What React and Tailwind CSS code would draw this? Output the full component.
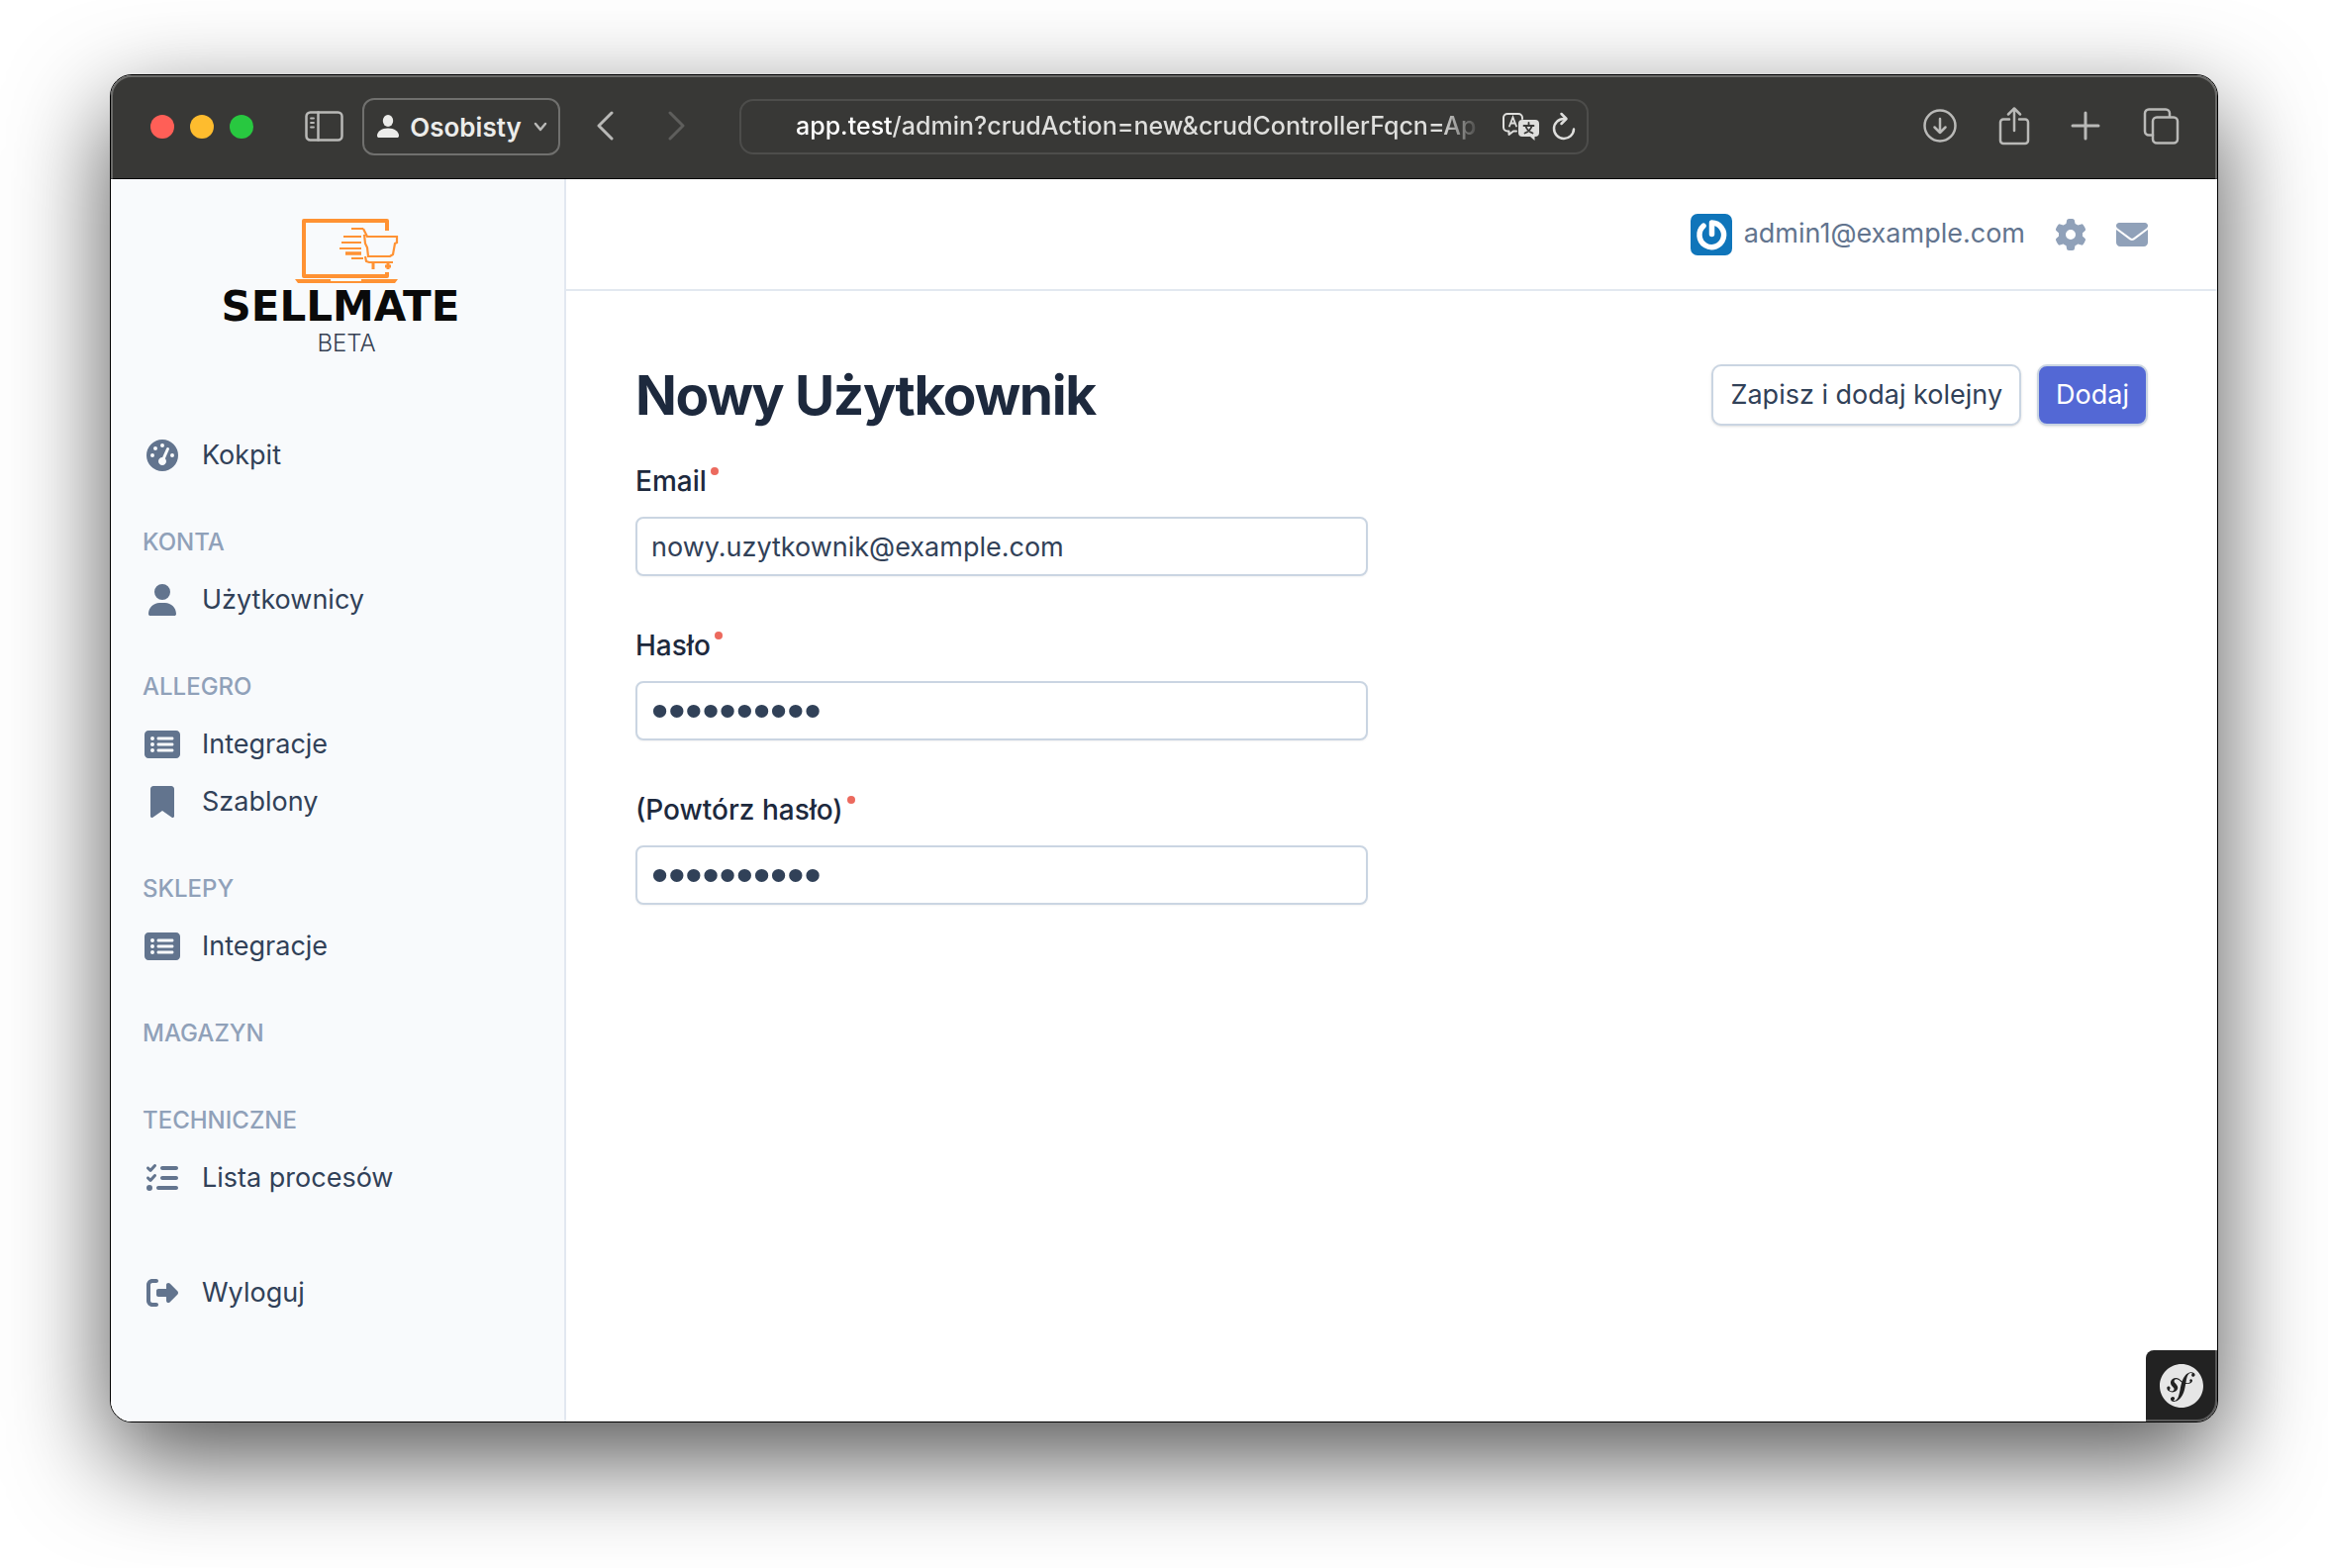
import {
  FaBookmark,
  FaEnvelope,
  FaGaugeHigh,
  FaGear,
  FaListCheck,
  FaRectangleList,
  FaRightFromBracket,
  FaUser,
} from "react-icons/fa6";
import { SiSymfony } from "react-icons/si";

const menu = [
  { items: [{ label: "Kokpit", icon: FaGaugeHigh }] },
  { title: "KONTA", items: [{ label: "Użytkownicy", icon: FaUser }] },
  {
    title: "ALLEGRO",
    items: [
      { label: "Integracje", icon: FaRectangleList, wide: true },
      { label: "Szablony", icon: FaBookmark },
    ],
  },
  { title: "SKLEPY", items: [{ label: "Integracje", icon: FaRectangleList, wide: true }] },
  { title: "MAGAZYN", items: [] },
  { title: "TECHNICZNE", items: [{ label: "Lista procesów", icon: FaListCheck }] },
];

const fields = [
  { id: "email", label: "Email", type: "email", value: "nowy.uzytkownik@example.com" },
  { id: "password", label: "Hasło", type: "password", value: "haslo12345" },
  { id: "password-repeat", label: "(Powtórz hasło)", type: "password", value: "haslo12345" },
];

// Outline icons used in the browser toolbar
const Stroke = ({ width, height, strokeWidth = 2.5, className = "", children }) => (
  <svg
    width={width}
    height={height}
    viewBox={`0 0 ${width} ${height}`}
    fill="none"
    stroke="currentColor"
    strokeWidth={strokeWidth}
    strokeLinecap="round"
    strokeLinejoin="round"
    className={className}
    aria-hidden="true"
  >
    {children}
  </svg>
);

const TranslateIcon = () => (
  <svg width="40" height="30" viewBox="0 0 40 30" fill="none" aria-hidden="true">
    <path
      d="M15 19.500h-3l-4.500 3.500v-3.500H6a4 4 0 0 1-4-4V6a4 4 0 0 1 4-4h11a4 4 0 0 1 4 4v1"
      stroke="currentColor"
      strokeWidth="2"
      strokeLinecap="round"
      strokeLinejoin="round"
    />
    <path d="M8 14.500 11.500 5.500 15 14.500M9.200 11.500h4.600" stroke="currentColor" strokeWidth="1.800" strokeLinecap="round" />
    <path d="M21 8h13a4 4 0 0 1 4 4v9a4 4 0 0 1-4 4h-.5v4l-4.500-4h-8a4 4 0 0 1-4-4v-9a4 4 0 0 1 4-4z" fill="currentColor" />
    <path d="M27.500 11v2.500M22.500 14h10M24.500 14.500c1 3.500 3.500 5.500 7 7M30.500 14.500c-1 3.500-3.500 5.500-7 7" stroke="#383836" strokeWidth="1.800" strokeLinecap="round" />
  </svg>
);

const Gravatar = () => (
  <svg viewBox="0 0 42 42" className="size-[42px]" aria-hidden="true">
    <rect width="42" height="42" rx="7" fill="#0f75ba" />
    <path
      d="M13 12.200A12.300 12.300 0 1 0 21.500 9V20.500"
      fill="none"
      stroke="#fff"
      strokeWidth="5.500"
      strokeLinecap="round"
      strokeLinejoin="round"
    />
  </svg>
);

const Logo = () => (
  <a href="#" className="flex flex-col items-center pl-1.5">
    <svg width="106" height="68" viewBox="0 0 106 68" fill="none" stroke="#ff9233" className="ml-3" aria-hidden="true">
      <path d="M94 14V4H10v56h84v-4" strokeWidth="4" strokeLinejoin="round" />
      <path d="M1 63h104l-3 4H4z" fill="#ff9233" stroke="none" />
      <path d="M37 63h31v2H37z" fill="#f8fafc" stroke="none" />
      <path d="M58 12h12M50 20h18M48 26h20M46 32h22M58 42h12" strokeWidth="2" />
      <path d="M52 37h16" strokeWidth="3.500" />
      <path d="M70 12l4 8h30v6l-2 1-2 11-3 2H75l-1-9-2-4-1-9M72 40l1 5 3 1h24" strokeWidth="2.200" />
      <path d="M80 47v6M95 47v6M92 50h6" strokeWidth="3" />
    </svg>
    <span className="font-['DejaVu_Sans',sans-serif] text-[42px] leading-[46px] font-bold text-[#0a0a0a]">SELLMATE</span>
    <span className="ml-3 text-[24px] leading-7 font-light text-gray-700">BETA</span>
  </a>
);

const MenuItem = ({ label, icon: Icon, wide }) => (
  <a href="#" className="flex h-[58px] items-center gap-5 text-[27px] text-slate-700">
    <span className="flex w-10 justify-center text-slate-500">
      <Icon size={wide ? 36 : 32} />
    </span>
    {label}
  </a>
);

const Toolbar = () => (
  <div className="grid h-[105px] shrink-0 grid-cols-[1fr_858px_1fr] items-center border-b border-black bg-[#383836] text-[#b9b9b7]">
    <div className="flex items-center pl-10">
      <div className="flex gap-4">
        <span className="size-6 rounded-full bg-[#ff5f57]" />
        <span className="size-6 rounded-full bg-[#febc2e]" />
        <span className="size-6 rounded-full bg-[#28c840]" />
      </div>
      <button type="button" aria-label="Pasek boczny" className="ml-[52px]">
        <Stroke width={40} height={32}>
          <rect x="1.500" y="1.500" width="36" height="28" rx="4" />
          <path d="M13.500 1.500v28" />
          <path d="M6 7.500h3M6 12h3M6 16.500h3" strokeWidth="1.800" />
        </Stroke>
      </button>
      <button
        type="button"
        className="ml-[18px] flex h-[58px] w-[200px] items-center justify-between rounded-[12px] border-2 border-[#70706e] pr-2.5 pl-[13px] text-[26px] font-semibold text-[#ececea]"
      >
        <svg width="22" height="24" viewBox="0 0 22 24" fill="currentColor" aria-hidden="true">
          <ellipse cx="11" cy="6" rx="5.200" ry="6" />
          <path d="M0 21c0-4 4.500-7.500 11-7.500S22 17 22 21c0 1.500-.8 2-2 2H2c-1.200 0-2-.5-2-2z" />
        </svg>
        Osobisty
        <Stroke width={16} height={12} className="text-[#b9b9b7]">
          <path d="M3 3l5 6 5-6" />
        </Stroke>
      </button>
      <button type="button" aria-label="Wstecz" className="ml-9">
        <Stroke width={20} height={32} strokeWidth={3}>
          <path d="M16 2L3 15l13 13" />
        </Stroke>
      </button>
      <button type="button" aria-label="Dalej" disabled className="ml-[52px] text-[#5e5e5c]">
        <Stroke width={20} height={32} strokeWidth={3}>
          <path d="M3 2l13 13L3 28" />
        </Stroke>
      </button>
    </div>

    <div className="flex h-[56px] items-center rounded-[14px] border-2 border-[#4d4d4b] pr-2.5 pl-[55px] text-[#dededc]">
      <div className="min-w-0 flex-1 mask-r-from-94% text-[25px] font-medium whitespace-nowrap">
        <span className="text-white">app.test</span>/admin?crudAction=new&amp;crudControllerFqcn=Ap
      </div>
      <button type="button" aria-label="Przetłumacz" className="ml-5">
        <TranslateIcon />
      </button>
      <button type="button" aria-label="Odśwież" className="ml-2.5">
        <Stroke width={26} height={30}>
          <path d="M13 7a10 10 0 1 0 10 10.500" />
          <path d="M10.500 2l5 5-5 5" />
        </Stroke>
      </button>
    </div>

    <div className="flex items-center justify-end pr-[38px]">
      <button type="button" aria-label="Pobrane">
        <Stroke width={36} height={38}>
          <circle cx="18" cy="18" r="15.500" />
          <path d="M18 11v14M12.500 19.500L18 25l5.500-5.500" />
        </Stroke>
      </button>
      <button type="button" aria-label="Udostępnij" className="ml-10">
        <Stroke width={34} height={40}>
          <path d="M12 12.500H6a3 3 0 0 0-3 3V34a3 3 0 0 0 3 3h22a3 3 0 0 0 3-3V15.500a3 3 0 0 0-3-3h-6" />
          <path d="M17 24V2M11 7.500L17 1.500l6 6" />
        </Stroke>
      </button>
      <button type="button" aria-label="Nowa karta" className="ml-10">
        <Stroke width={30} height={32} strokeWidth={3}>
          <path d="M15 2v26M2 15h26" />
        </Stroke>
      </button>
      <button type="button" aria-label="Karty" className="ml-[42px]">
        <Stroke width={38} height={38}>
          <path d="M11 27.500H7a4 4 0 0 1-4-4V5.500a4 4 0 0 1 4-4h17a4 4 0 0 1 4 4v3" />
          <rect x="11" y="9.500" width="25" height="26" rx="4" />
        </Stroke>
      </button>
    </div>
  </div>
);

const Sidebar = () => (
  <aside className="w-[460px] shrink-0 border-r-2 border-slate-200 bg-slate-50 pt-[38px]">
    <Logo />
    <nav className="mt-[70px] pl-8">
      {menu.map((section, index) => (
        <div key={index}>
          {section.title && (
            <h2 className="pt-[45px] pb-[15px] text-[24px] leading-7 font-medium text-slate-400">{section.title}</h2>
          )}
          {section.items.map((item) => (
            <MenuItem key={item.label} {...item} />
          ))}
        </div>
      ))}
      <div className="mt-[58px]">
        <MenuItem label="Wyloguj" icon={FaRightFromBracket} />
      </div>
    </nav>
  </aside>
);

const Field = ({ id, label, type, value }) => (
  <div>
    <label htmlFor={id} className="mb-5 flex gap-1 text-[28px] leading-8 font-medium text-slate-800">
      {label}
      <span className="mt-0.5 size-2 rounded-full bg-[#ec6a5e]" />
    </label>
    {/* password bullets are drawn larger than regular text */}
    <input
      id={id}
      type={type}
      defaultValue={value}
      required
      className={`block h-[60px] w-[740px] max-w-full rounded-[8px] border-2 border-slate-300 bg-white px-3.5 text-slate-700 shadow-xs outline-none ${
        type === "password" ? "font-['Liberation_Sans',sans-serif] text-[49px]" : "text-[27px]"
      }`}
    />
  </div>
);

const App = () => {
  return (
    <div className="flex min-h-screen bg-white px-[111px] pt-[75px] pb-[147px] font-[Inter,'Liberation_Sans',sans-serif]">
      <div className="relative flex min-w-0 flex-1 flex-col overflow-hidden rounded-[22px] border border-black bg-white shadow-[0_36px_100px_rgba(0,0,0,0.68)]">
        <Toolbar />
        <div className="flex flex-1">
          <Sidebar />
          <div className="min-w-0 flex-1">
            <header className="flex h-[113px] items-center justify-end border-b-2 border-slate-200 pr-[70px] text-slate-400">
              <a href="#" className="flex items-center gap-3 text-[27px] text-slate-500">
                <Gravatar />
                admin1@example.com
              </a>
              <button type="button" aria-label="Ustawienia" className="ml-[30px]">
                <FaGear size={32} />
              </button>
              <button type="button" aria-label="Wiadomości" className="ml-[30px]">
                <FaEnvelope size={32} />
              </button>
            </header>

            <form className="px-[70px] pt-[74px]">
              <div className="flex items-center justify-between">
                <h1 className="text-[55px] leading-[62px] font-bold tracking-tight text-slate-800">Nowy Użytkownik</h1>
                <div className="flex gap-4">
                  <button
                    type="button"
                    className="h-[62px] rounded-[10px] border-2 border-slate-300 bg-white px-[17px] text-[27px] text-slate-700 shadow-sm"
                  >
                    Zapisz i dodaj kolejny
                  </button>
                  <button
                    type="button"
                    className="h-[62px] rounded-[10px] border-2 border-slate-300 bg-[#5368d5] px-[17px] text-[27px] text-white shadow-sm"
                  >
                    Dodaj
                  </button>
                </div>
              </div>
              <div className="mt-10 flex flex-col gap-[54px]">
                {fields.map((field) => (
                  <Field key={field.id} {...field} />
                ))}
              </div>
            </form>
          </div>
        </div>
        <button
          type="button"
          aria-label="Symfony"
          className="absolute right-0 bottom-0 flex size-[72px] items-center justify-center rounded-tl-[8px] bg-[#222222] text-[#e6e6e6]"
        >
          <SiSymfony size={44} />
        </button>
        {/* light rim along the window edge */}
        <div className="pointer-events-none absolute inset-0 rounded-[21px] border-2 border-white/25" />
      </div>
    </div>
  );
};

export default App;
